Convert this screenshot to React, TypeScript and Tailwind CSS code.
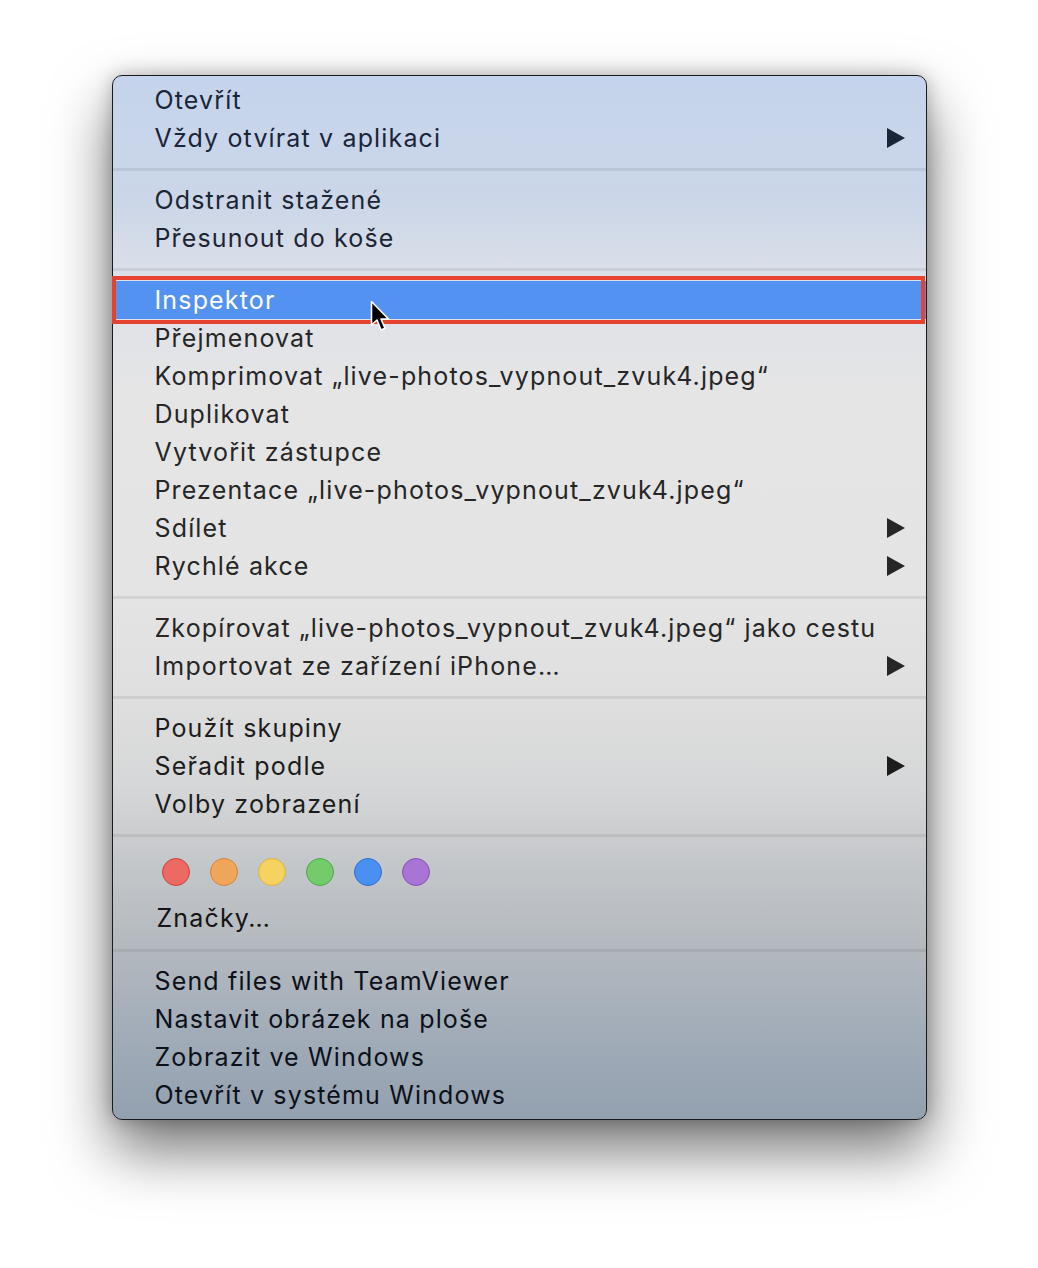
import React from "react";

type Item = { label: string; sub?: boolean; active?: boolean };

const sections: { color: string; items: Item[] }[] = [
  {
    color: "text-[#1b2538]",
    items: [{ label: "Otevřít" }, { label: "Vždy otvírat v aplikaci", sub: true }],
  },
  {
    color: "text-[#1d2535]",
    items: [{ label: "Odstranit stažené" }, { label: "Přesunout do koše" }],
  },
  {
    color: "text-[#262626]",
    items: [
      { label: "Inspektor", active: true },
      { label: "Přejmenovat" },
      { label: "Komprimovat „live-photos_vypnout_zvuk4.jpeg“" },
      { label: "Duplikovat" },
      { label: "Vytvořit zástupce" },
      { label: "Prezentace „live-photos_vypnout_zvuk4.jpeg“" },
      { label: "Sdílet", sub: true },
      { label: "Rychlé akce", sub: true },
    ],
  },
  {
    color: "text-[#262626]",
    items: [
      { label: "Zkopírovat „live-photos_vypnout_zvuk4.jpeg“ jako cestu" },
      { label: "Importovat ze zařízení iPhone…", sub: true },
    ],
  },
  {
    color: "text-[#1c1c1c]",
    items: [
      { label: "Použít skupiny" },
      { label: "Seřadit podle", sub: true },
      { label: "Volby zobrazení" },
    ],
  },
];

const lastItems = [
  "Send files with TeamViewer",
  "Nastavit obrázek na ploše",
  "Zobrazit ve Windows",
  "Otevřít v systému Windows",
];

const tags = [
  "bg-[#ec6a63] border-[#c9463f]",
  "bg-[#f0a65a] border-[#d3843a]",
  "bg-[#f5d262] border-[#d9b440]",
  "bg-[#74cb6c] border-[#4fa94a]",
  "bg-[#4a8ff2] border-[#2f6fd0]",
  "bg-[#a874d6] border-[#8652b6]",
];

function Arrow() {
  return (
    <svg width="18" height="20" viewBox="0 0 18 20" className="fill-current">
      <path d="M0 0 L18 10 L0 20 Z" />
    </svg>
  );
}

function Separator() {
  return (
    <div className="h-[24px] flex items-center">
      <div className="h-[3px] w-full bg-black/[0.07]" />
    </div>
  );
}

function Cursor() {
  return (
    <svg width="24" height="34" viewBox="0 0 24 34" className="absolute left-[257px] top-[19px]">
      <path
        d="M1.5 1.5 L1.5 25 L7 20 L11 30 L15 28.3 L11 19 L18.5 19 Z"
        fill="#000"
        stroke="#fff"
        strokeWidth="1.6"
        strokeLinejoin="round"
      />
    </svg>
  );
}

function Row({ item }: { item: Item }) {
  return (
    <div
      className={`relative h-[38px] flex items-center pl-[42px] pr-[21px] ${
        item.active ? "bg-[#5392f0] text-white" : ""
      }`}
    >
      <span className="flex-1 leading-[38px]">{item.label}</span>
      {item.sub && <Arrow />}
      {item.active && (
        <>
          <div className="absolute -top-[5px] -bottom-[5px] -left-[1px] right-[1px] border-[4px] border-[#e5432f]" />
          <Cursor />
        </>
      )}
    </div>
  );
}

export default function App() {
  return (
    <div className="w-[1038px] h-[1268px] bg-white pt-[75px] font-['Inter','Noto_Sans',sans-serif]">
      <div
        className="mx-auto w-[815px] rounded-[10px] border border-[#1a1a1a] overflow-visible py-[5px] text-[25px] tracking-[1.15px] shadow-[0_30px_60px_rgba(0,0,0,0.55),0_0_18px_rgba(0,0,0,0.25)] bg-[linear-gradient(180deg,#c5d4ec_0%,#cbd6e8_12%,#dde1e8_20%,#e5e5e6_30%,#e4e4e4_50%,#e0e0e0_58%,#d6d7d8_68%,#c3c6c9_76%,#b2b8be_84%,#a1acb8_92%,#93a0af_100%)]"
      >
        {sections.map((s, i) => (
          <React.Fragment key={i}>
            {i > 0 && <Separator />}
            <div className={s.color}>
              {s.items.map((it) => (
                <Row key={it.label} item={it} />
              ))}
            </div>
          </React.Fragment>
        ))}
        <Separator />
        <div className="h-[50px] flex items-center gap-[20px] pl-[49px]">
          {tags.map((c) => (
            <div key={c} className={`w-[28px] h-[28px] rounded-full border-[1.5px] ${c}`} />
          ))}
        </div>
        <div className="h-[38px] mt-[3px] flex items-center pl-[44px] text-[#141414]">Značky…</div>
        <Separator />
        <div className="text-[#0c1018]">
          {lastItems.map((l) => (
            <Row key={l} item={{ label: l }} />
          ))}
        </div>
      </div>
    </div>
  );
}
